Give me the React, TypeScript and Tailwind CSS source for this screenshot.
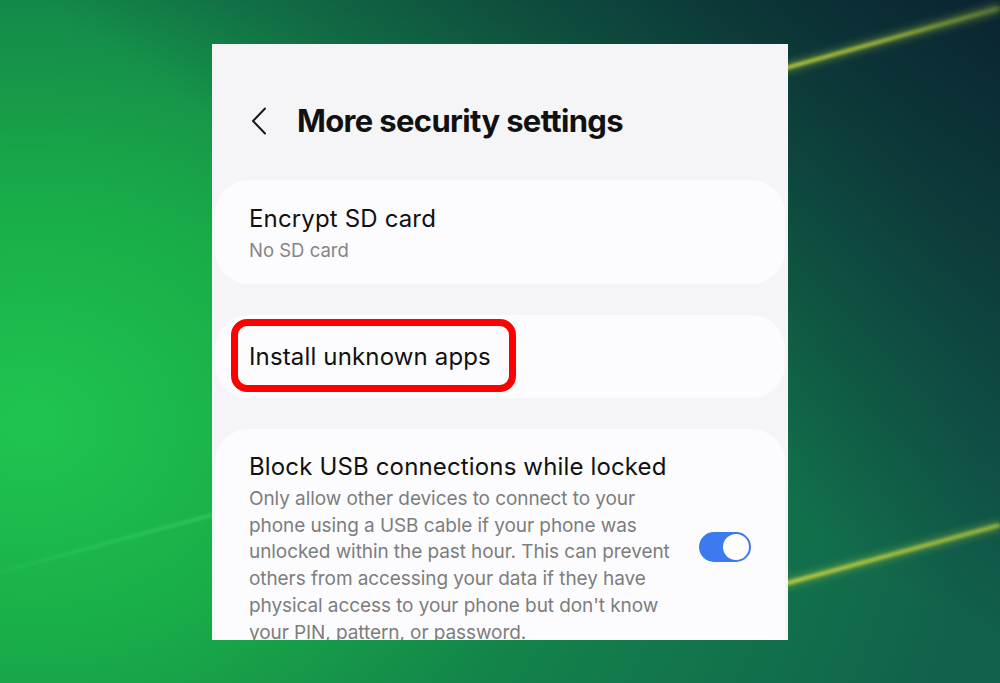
import React from "react";

const descLines = [
  "Only allow other devices to connect to your",
  "phone using a USB cable if your phone was",
  "unlocked within the past hour. This can prevent",
  "others from accessing your data if they have",
  "physical access to your phone but don't know",
  "your PIN, pattern, or password.",
];

function Streaks() {
  return (
    <svg className="absolute inset-0 h-full w-full" viewBox="0 0 1000 683" preserveAspectRatio="none">
      <defs>
        <filter id="blur1" x="-10%" y="-200%" width="120%" height="500%">
          <feGaussianBlur stdDeviation="1.4" />
        </filter>
        <filter id="blur2" x="-10%" y="-200%" width="120%" height="500%">
          <feGaussianBlur stdDeviation="3.5" />
        </filter>
        <linearGradient id="s1" x1="700" y1="92" x2="1000" y2="8" gradientUnits="userSpaceOnUse">
          <stop offset="0" stopColor="#c4d645" stopOpacity="1" />
          <stop offset="0.6" stopColor="#b2c63c" stopOpacity="0.8" />
          <stop offset="1" stopColor="#a0b83a" stopOpacity="0.3" />
        </linearGradient>
        <linearGradient id="s2" x1="700" y1="607" x2="1000" y2="525" gradientUnits="userSpaceOnUse">
          <stop offset="0" stopColor="#c4d645" stopOpacity="1" />
          <stop offset="1" stopColor="#b2c63c" stopOpacity="0.75" />
        </linearGradient>
        <linearGradient id="s3" x1="0" y1="570" x2="260" y2="502" gradientUnits="userSpaceOnUse">
          <stop offset="0" stopColor="#3fd463" stopOpacity="0.15" />
          <stop offset="1" stopColor="#4ee06e" stopOpacity="0.6" />
        </linearGradient>
      </defs>
      <line x1="700" y1="92" x2="1000" y2="8" stroke="#a8c43c" strokeOpacity="0.35" strokeWidth="10" filter="url(#blur2)" />
      <line x1="700" y1="92" x2="1000" y2="8" stroke="url(#s1)" strokeWidth="4" filter="url(#blur1)" />
      <line x1="700" y1="607" x2="1000" y2="525" stroke="#a8c43c" strokeOpacity="0.35" strokeWidth="10" filter="url(#blur2)" />
      <line x1="700" y1="607" x2="1000" y2="525" stroke="url(#s2)" strokeWidth="4" filter="url(#blur1)" />
      <line x1="0" y1="572" x2="260" y2="502" stroke="url(#s3)" strokeWidth="3" filter="url(#blur1)" />
    </svg>
  );
}

function Toggle() {
  return (
    <div className="mb-[4px] flex h-[30px] w-[52px] shrink-0 items-center justify-end rounded-full bg-[#3d79ef] pr-[2px]">
      <div className="h-[26px] w-[26px] rounded-full bg-white" />
    </div>
  );
}

export default function App() {
  return (
    <div
      className="relative h-[683px] w-[1000px] overflow-hidden pt-[44px] bg-[image:linear-gradient(to_bottom_left,#0a2430_0%,rgba(10,36,48,0)_48%),radial-gradient(ellipse_95%_115%_at_3%_62%,#1fc550_0%,#19ad48_28%,#13834a_58%,#11624c_100%)]"
      style={{ fontFamily: "Inter, Roboto, 'Noto Sans', sans-serif" }}
    >
      <Streaks />
      <div className="relative mx-auto h-[596px] w-[576px] overflow-hidden bg-[#f5f5f7]">
        {/* Header */}
        <div className="flex h-[136px] items-start pt-[57px]">
          <div className="flex h-[40px] items-center pl-[39px]">
            <svg width="16" height="28" viewBox="0 0 16 28" fill="none">
              <path d="M14 1.5 L2 14 L14 26.5" stroke="#1a1a1a" strokeWidth="2" strokeLinecap="round" strokeLinejoin="round" />
            </svg>
            <h1 className="ml-[30px] text-[31px] font-bold leading-[40px] tracking-[-0.65px] text-[#111111]">
              More security settings
            </h1>
          </div>
        </div>

        {/* Card 1 */}
        <div className="mx-[3px] rounded-[34px] bg-[#fcfcfe] pb-[21px] pl-[34px] pr-[34px] pt-[23px]">
          <div className="text-[24px] leading-[32px] tracking-[0.15px] text-[#111111]">Encrypt SD card</div>
          <div className="mt-[2px] text-[18.5px] leading-[26px] text-[#858585]">No SD card</div>
        </div>

        {/* Card 2 */}
        <div className="relative mx-[3px] mt-[31px] flex h-[83px] items-center rounded-[34px] bg-[#fcfcfe] pl-[34px]">
          <div className="text-[24px] leading-[32px] tracking-[0.15px] text-[#111111]">Install unknown apps</div>
          <div className="absolute left-[16px] top-[4px] h-[73px] w-[285px] rounded-[16px] border-[7px] border-[#ff0000]" />
        </div>

        {/* Card 3 */}
        <div className="mx-[3px] mt-[31px] flex items-center rounded-[34px] bg-[#fcfcfe] pb-[20px] pl-[34px] pr-[34px] pt-[22px]">
          <div className="flex-1">
            <div className="text-[24px] leading-[32px] tracking-[0.15px] text-[#111111]">Block USB connections while locked</div>
            <div className="mt-[3px] text-[19px] leading-[26.7px] tracking-[-0.08px] text-[#7d7d7d]">
              {descLines.map((l) => (
                <div key={l} className="whitespace-nowrap">
                  {l}
                </div>
              ))}
            </div>
          </div>
          <Toggle />
        </div>
      </div>
    </div>
  );
}
